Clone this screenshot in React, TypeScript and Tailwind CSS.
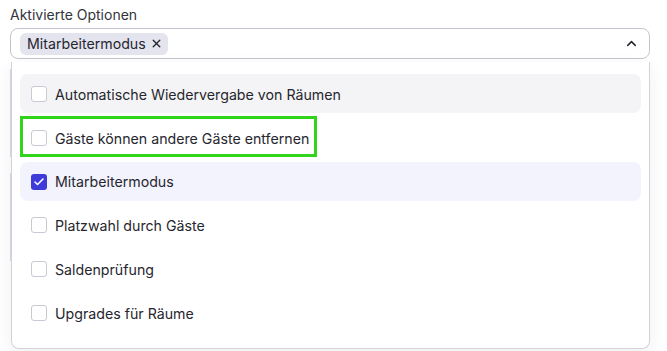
import { Check, ChevronUp, X } from "lucide-react";

type Option = {
  label: string;
  checked?: boolean;
  hovered?: boolean;
  outlined?: boolean;
};

const options: Option[] = [
  { label: "Automatische Wiedervergabe von Räumen", hovered: true },
  { label: "Gäste können andere Gäste entfernen", outlined: true },
  { label: "Mitarbeitermodus", checked: true },
  { label: "Platzwahl durch Gäste" },
  { label: "Saldenprüfung" },
  { label: "Upgrades für Räume" },
];

function OptionRow({ label, checked, hovered, outlined }: Option) {
  return (
    <div
      className={`relative flex items-center h-[39px] px-[11px] rounded-lg ${
        checked ? "bg-[#f3f3fe]" : hovered ? "bg-[#f4f4f6]" : "bg-white"
      }`}
    >
      {checked ? (
        <span className="flex items-center justify-center w-[16px] h-[16px] mt-[1px] rounded-[3px] bg-[#3e3bd8]">
          <Check size={12} strokeWidth={3.2} className="text-white" />
        </span>
      ) : (
        <span className="w-[16px] h-[16px] mt-[1px] rounded-[3px] border border-[#c9c9d3] bg-white" />
      )}
      <span className="ml-[8px] mt-[3px] text-[14.2px] text-[#26262e] leading-none">{label}</span>
      {outlined && (
        <span className="absolute left-0 top-[-2px] bottom-0 w-[297px] border-[3px] border-[#2fd41b]" />
      )}
    </div>
  );
}

export default function App() {
  return (
    <div className="relative w-[667px] h-[351px] overflow-hidden bg-white font-['Inter',sans-serif]">
      <div className="pl-[10px] pr-[17px] pt-[6px]">
        <div className="text-[14px] leading-[18px] text-[#33333b]">Aktivierte Optionen</div>
        <div className="mt-[4px] flex items-center h-[31px] border border-[#c4c4ce] rounded-lg pl-[9px] pr-[10px]">
          <span className="flex items-center h-[22px] pl-[7px] pr-[5px] rounded-md bg-[#e4e4ee] text-[14.2px] text-[#26262e]">
            Mitarbeitermodus
            <X size={13} strokeWidth={2.6} className="ml-[4px] text-[#26262e]" />
          </span>
          <ChevronUp size={15} strokeWidth={2.4} className="ml-auto text-[#26262e]" />
        </div>
        <div className="mt-[10px] flex flex-col gap-[16px]">
          <div className="h-[88px] border-l border-[#d9d9e1]" />
          <div className="h-[88px] border-l border-[#d9d9e1]" />
        </div>
      </div>

      <div className="absolute left-[11px] top-[62px] w-[639px] h-[287px] rounded-b-lg border border-t-0 border-[#d2d2dd] bg-white px-[8px] pt-[12px] shadow-[0_6px_18px_rgba(40,40,70,0.07)]">
        <div className="flex flex-col gap-[4.8px]">
          {options.map((o) => (
            <OptionRow key={o.label} {...o} />
          ))}
        </div>
      </div>
    </div>
  );
}
